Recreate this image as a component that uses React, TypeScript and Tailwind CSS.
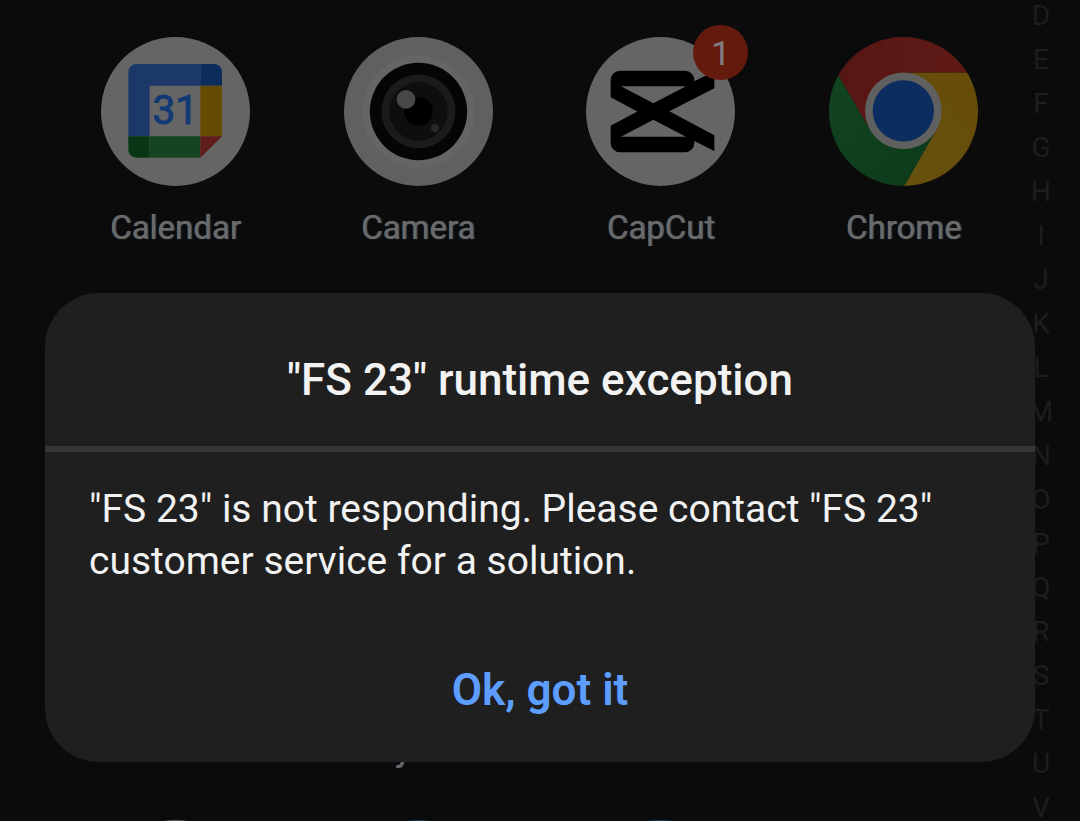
import type { ReactNode } from "react";

const LETTERS = "DEFGHIJKLMNOPQRSTUV".split("");

function CalendarIcon() {
  return (
    <svg viewBox="63 51 447 447" className="size-full" aria-hidden="true">
      <circle cx="286.5" cy="274.5" r="223.5" fill="#656565" />
      <path d="M145 349V156a24 24 0 0 1 24-24H361V197H209V349Z" fill="#1c3869" />
      <path d="M361 132H402a24 24 0 0 1 24 24V197H361Z" fill="#0c2c5c" />
      <path d="M361 197H426V349H361Z" fill="#664b02" />
      <path d="M145 349H209V413H169a24 24 0 0 1-24-24Z" fill="#0a3616" />
      <path d="M209 349H361V413H209Z" fill="#154422" />
      <path d="M361 349H426L361 413Z" fill="#5f1c18" />
      <text x="286" y="311" textAnchor="middle" fontSize="122" fontFamily="Roboto, sans-serif" fontWeight="400" fill="#123974" stroke="#123974" strokeWidth="3">
        31
      </text>
    </svg>
  );
}

function CameraIcon() {
  return (
    <svg viewBox="63 51 447 447" className="size-full" aria-hidden="true">
      <circle cx="286.5" cy="274.5" r="223.5" fill="#606060" />
      <circle cx="286.5" cy="274.5" r="169" fill="#656565" />
      <circle cx="286.5" cy="274.5" r="146" fill="#050505" />
      <circle cx="286.5" cy="274" r="111" fill="#1b1b1b" />
      <circle cx="286.5" cy="274" r="88" fill="#0e0e0e" />
      <circle cx="286.5" cy="274.5" r="43" fill="#000" />
      <circle cx="249" cy="238" r="28" fill="#484848" />
      <circle cx="336" cy="324" r="12" fill="#282828" />
    </svg>
  );
}

function CapCutIcon() {
  return (
    <svg viewBox="63 81 447 447" className="size-full" aria-hidden="true">
      <circle cx="286.5" cy="304.5" r="223.5" fill="#656565" />
      <path
        fillRule="evenodd"
        fill="#000"
        d="M137 262V210a28 28 0 0 1 28-28H360a28 28 0 0 1 28 28V214L448 184V235L313 304L448 376V423L388 393V399a28 28 0 0 1-28 28H165a28 28 0 0 1-28-28V347L217 304.500ZM168 229L265 280L363 229ZM168 380H363L265 329Z"
      />
    </svg>
  );
}

function ChromeIcon() {
  return (
    <svg viewBox="63 51 447 447" className="size-full" aria-hidden="true">
      <defs>
        <clipPath id="chromeDisc">
          <circle cx="286.5" cy="274.5" r="223.5" />
        </clipPath>
        <linearGradient id="chromeRed" x1="0" x2="1">
          <stop offset="0" stopColor="#561613" />
          <stop offset="1" stopColor="#601a16" />
        </linearGradient>
        <linearGradient id="chromeYellow" x1="0" y1="1" x2="1" y2="0">
          <stop offset="0" stopColor="#66510f" />
          <stop offset="1" stopColor="#664c08" />
        </linearGradient>
        <linearGradient id="chromeGreen" x1="0" y1="0" x2="1" y2="1">
          <stop offset="0" stopColor="#134521" />
          <stop offset="1" stopColor="#0c3a1a" />
        </linearGradient>
      </defs>
      <g clipPath="url(#chromeDisc)">
        <path d="M63 51H510V158H286L185 328L92 168L63 118Z" fill="url(#chromeRed)" />
        <path d="M63 118L92 168L185 328L286 274L385 330L289 498H63Z" fill="url(#chromeGreen)" />
        <path d="M286 158H510V498H289L385 330L286 274Z" fill="url(#chromeYellow)" />
      </g>
      <circle cx="286" cy="272.500" r="115" fill="#606060" />
      <circle cx="286" cy="272.500" r="92" fill="#0b2d5f" />
    </svg>
  );
}

function Disc({ className }: { className: string }) {
  return <span className={`block size-full rounded-full ${className}`} />;
}

function AppTile({ icon, label, badge, place = "" }: { icon?: ReactNode; label?: string; badge?: number; place?: string }) {
  return (
    <a href="#" className={`flex flex-col items-center ${place}`}>
      <span className="relative block size-[149px]">
        {icon}
        {badge !== undefined && (
          <span className="absolute -top-3 -right-[13px] flex size-[55px] items-center justify-center rounded-full bg-[#641b0e] text-[34px] leading-none text-[#808080]">
            {badge}
          </span>
        )}
      </span>
      <span className="mt-[22px] text-[33px] leading-10 text-[#6a6a6a] [text-shadow:1px_0_1px_#5a5a5a]">{label}</span>
    </a>
  );
}

export default function App() {
  return (
    <div className="relative h-screen overflow-hidden bg-[#0b0b0b] font-[Roboto,sans-serif]">
      <main className="flex">
        <div className="grid flex-1 auto-rows-[261px] grid-cols-4 pt-[37px] pl-[54px]">
          <AppTile icon={<CalendarIcon />} label="Calendar" />
          <AppTile icon={<CameraIcon />} label="Camera" />
          <AppTile icon={<CapCutIcon />} label="CapCut" badge={1} />
          <AppTile icon={<ChromeIcon />} label="Chrome" />
          <AppTile label="My" place="col-start-2 row-start-3 pr-15" />
          <AppTile icon={<Disc className="bg-[#656565]" />} place="col-start-1 row-start-4" />
          <AppTile icon={<Disc className="bg-[#0b4266]" />} place="col-start-2 row-start-4" />
          <AppTile icon={<Disc className="bg-[#0b4266]" />} place="col-start-3 row-start-4" />
        </div>
        <nav aria-label="Alphabetical index" className="mr-[23px] flex w-8 flex-col gap-[18px] pt-[3px] text-center text-[28px] leading-[26px] text-[#1d1d1d]">
          {LETTERS.map((letter) => (
            <a key={letter} href="#">
              {letter}
            </a>
          ))}
        </nav>
      </main>

      <div className="absolute inset-x-0 bottom-0 px-[45px] pb-[59px]">
        <section role="alertdialog" aria-labelledby="title" aria-describedby="message" className="rounded-[54px] bg-[#1f1f1f] text-[#f2f2f2]">
          <h1 id="title" className="border-b-6 border-[#363636] px-11 pt-[61px] pb-10 text-center text-[44px] leading-[52px] font-medium">
            "FS 23" runtime exception
          </h1>
          <p id="message" className="px-11 pt-[31px] text-[39px] leading-[52px]">
            "FS 23" is not responding. Please contact "FS 23" customer service for a solution.
          </p>
          <div className="flex justify-center pt-[77px] pb-[46px]">
            <button type="button" className="text-[44px] leading-[52px] font-semibold text-[#5c9dff]">
              Ok, got it
            </button>
          </div>
        </section>
      </div>
    </div>
  );
}
